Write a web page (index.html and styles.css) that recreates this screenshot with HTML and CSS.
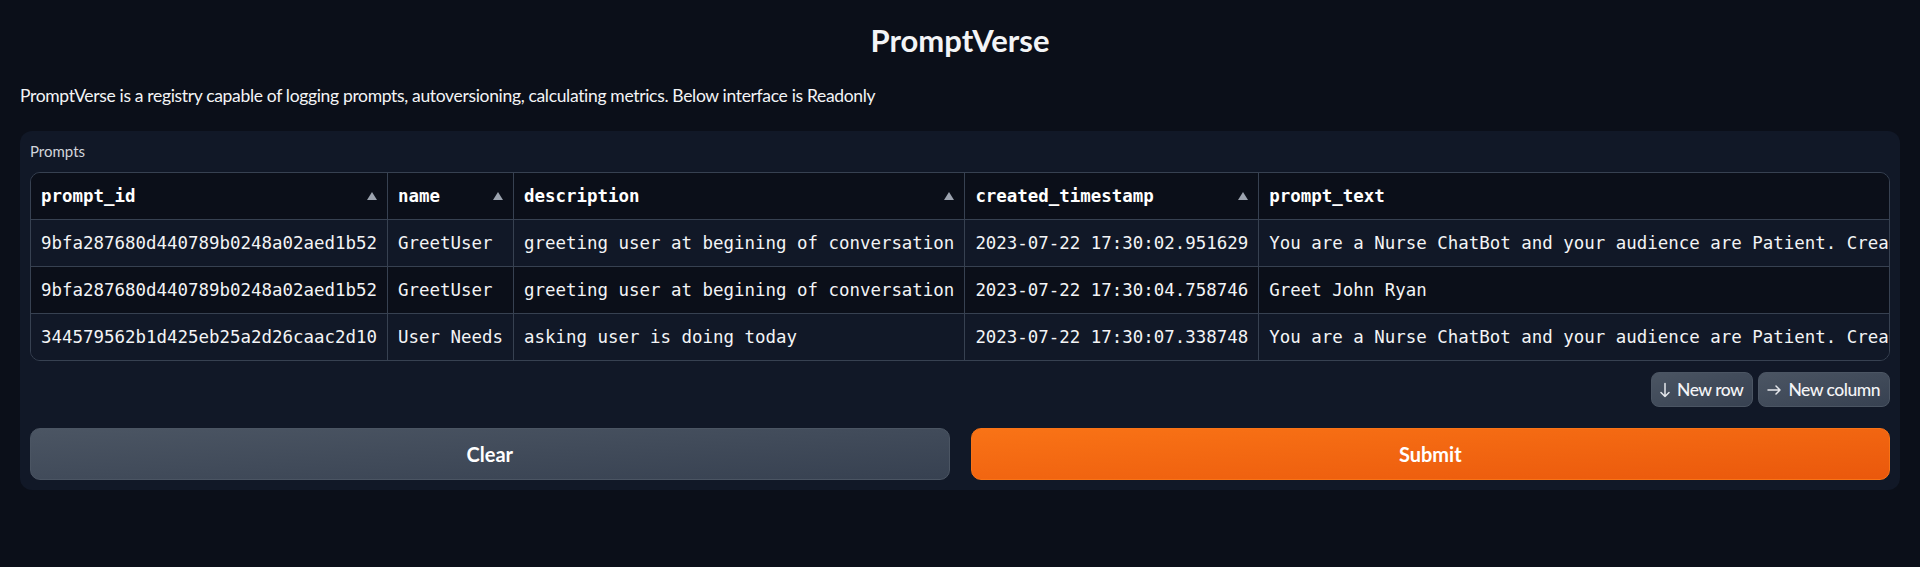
FILE: index.html
```html
<!DOCTYPE html>
<html lang="en">
<head>
<meta charset="utf-8">
<title>PromptVerse</title>
<link rel="stylesheet" href="styles.css">
</head>
<body>
<div class="app">
  <h1 class="title">PromptVerse</h1>
  <p class="intro">PromptVerse is a registry capable of logging prompts, autoversioning, calculating metrics. Below interface is Readonly</p>
  <div class="panel">
    <span class="label">Prompts</span>
    <div class="table-wrap">
      <table class="grid">
        <thead>
          <tr>
            <th><div class="th"><span>prompt_id</span><svg class="sort" width="10" height="8" viewBox="0 0 10 8"><polygon points="5,0 10,8 0,8"/></svg></div></th>
            <th><div class="th"><span>name</span><svg class="sort" width="10" height="8" viewBox="0 0 10 8"><polygon points="5,0 10,8 0,8"/></svg></div></th>
            <th><div class="th"><span>description</span><svg class="sort" width="10" height="8" viewBox="0 0 10 8"><polygon points="5,0 10,8 0,8"/></svg></div></th>
            <th><div class="th"><span>created_timestamp</span><svg class="sort" width="10" height="8" viewBox="0 0 10 8"><polygon points="5,0 10,8 0,8"/></svg></div></th>
            <th><div class="th"><span>prompt_text</span><svg class="sort" width="10" height="8" viewBox="0 0 10 8"><polygon points="5,0 10,8 0,8"/></svg></div></th>
          </tr>
        </thead>
        <tbody>
          <tr>
            <td>9bfa287680d440789b0248a02aed1b52</td>
            <td>GreetUser</td>
            <td>greeting user at begining of conversation</td>
            <td>2023-07-22 17:30:02.951629</td>
            <td>You are a Nurse ChatBot and your audience are Patient. Create a warm greeting for the patient {name}.</td>
          </tr>
          <tr>
            <td>9bfa287680d440789b0248a02aed1b52</td>
            <td>GreetUser</td>
            <td>greeting user at begining of conversation</td>
            <td>2023-07-22 17:30:04.758746</td>
            <td>Greet John Ryan</td>
          </tr>
          <tr>
            <td>344579562b1d425eb25a2d26caac2d10</td>
            <td>User Needs</td>
            <td>asking user is doing today</td>
            <td>2023-07-22 17:30:07.338748</td>
            <td>You are a Nurse ChatBot and your audience are Patient. Create a question asking how the patient is doing today.</td>
          </tr>
        </tbody>
      </table>
    </div>
    <div class="row-actions">
      <button class="small-btn"><svg width="10" height="16" viewBox="0 0 10 16"><path d="M5 1.5V14.5M1 10.5L5 14.5L9 10.5"/></svg><span>New row</span></button>
      <button class="small-btn"><svg width="14" height="12" viewBox="0 0 14 12"><path d="M1 6H13M9 2L13 6L9 10"/></svg><span>New column</span></button>
    </div>
    <div class="main-actions">
      <button class="btn secondary">Clear</button>
      <button class="btn primary">Submit</button>
    </div>
  </div>
</div>
</body>
</html>
```
FILE: styles.css
```css
html, body {
  margin: 0;
  padding: 0;
  background: #0b0f19;
}

body {
  font-family: "Lato", "Noto Sans", sans-serif;
  color: #f3f4f6;
}

.app {
  padding: 20px 20px 0 20px;
}

.title {
  margin: 0;
  text-align: center;
  font-size: 31px;
  line-height: 40px;
  font-weight: 700;
  color: #f3f4f6;
}

.intro {
  margin: 23px 0 0 0;
  font-size: 17.5px;
  line-height: 26px;
  letter-spacing: -0.33px;
  color: #f3f4f6;
}

.panel {
  margin-top: 22px;
  background: #111827;
  border-radius: 12px;
  padding: 10px;
  display: flex;
  flex-direction: column;
}

.label {
  display: block;
  font-size: 15px;
  line-height: 20px;
  color: #d1d5db;
}

.table-wrap {
  margin-top: 11px;
  border: 1px solid #374151;
  border-radius: 10px;
  overflow: hidden;
}

.grid {
  border-collapse: collapse;
  font-family: "DejaVu Sans Mono", "Liberation Mono", monospace;
  font-size: 17.45px;
  color: #f3f4f6;
  white-space: nowrap;
}

.grid th,
.grid td {
  padding: 10px;
  line-height: 26px;
  text-align: left;
  border-right: 1px solid #374151;
  border-bottom: 1px solid #374151;
}

.grid th:last-child,
.grid td:last-child {
  border-right: none;
}

.grid tbody tr:last-child td {
  border-bottom: none;
}

.grid th {
  background: #0b0f19;
  font-weight: 700;
  color: #ffffff;
}

.grid tbody tr:nth-child(odd) td {
  background: #111827;
}

.grid tbody tr:nth-child(even) td {
  background: #0b0f19;
}

.th {
  display: flex;
  align-items: center;
  justify-content: space-between;
  gap: 12px;
}

.sort {
  fill: #9ca3af;
  flex: none;
}

.row-actions {
  margin-top: 11px;
  display: flex;
  justify-content: flex-end;
  gap: 5px;
}

.small-btn {
  display: flex;
  align-items: center;
  gap: 7px;
  height: 35px;
  padding: 0 9px 0 8px;
  border: 1px solid #4b5563;
  border-radius: 8px;
  background: linear-gradient(to bottom right, #4b5563, #374151);
  color: #f3f4f6;
  font-family: "Lato", "Noto Sans", sans-serif;
  font-size: 17.5px;
  letter-spacing: -0.5px;
  font-weight: 500;
}

.small-btn svg {
  fill: none;
  stroke: #e5e7eb;
  stroke-width: 1.5;
  stroke-linecap: round;
  stroke-linejoin: round;
}

.main-actions {
  margin-top: 21px;
  display: flex;
  gap: 21px;
}

.btn {
  flex: 1;
  height: 52px;
  border-radius: 10px;
  font-family: "Lato", "Noto Sans", sans-serif;
  font-size: 20px;
  font-weight: 700;
  color: #ffffff;
}

.btn.secondary {
  border: 1px solid #4b5563;
  background: linear-gradient(to bottom right, #4b5563, #374151);
}

.btn.primary {
  border: 1px solid #f97316;
  background: linear-gradient(to bottom right, #f97316, #ea580c);
}
```
